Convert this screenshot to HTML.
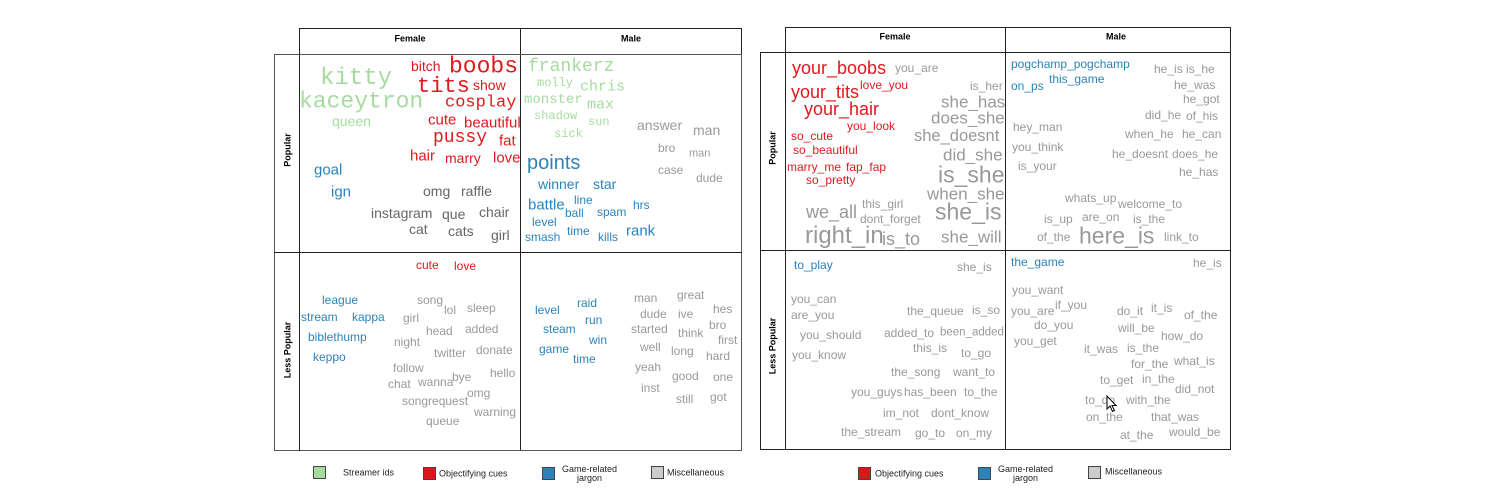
<!DOCTYPE html>
<html><head><meta charset="utf-8"><style>
html,body{margin:0;padding:0;background:#fff;width:1500px;height:500px;overflow:hidden;position:relative;font-family:"Liberation Sans",sans-serif}
.b{position:absolute;border:1px solid #222;box-sizing:border-box}
span{position:absolute;white-space:nowrap;line-height:1;transform:translateY(-50%);font-size:12px;color:#999}
.m{font-family:"Liberation Mono",monospace}
.g{color:#a6dba0}.r{color:#e0191e}.u{color:#2b83ba}.d{color:#666}
.h{font-size:9px;font-weight:bold;color:#000;transform:translate(-50%,-50%)}
.v{font-size:9px;font-weight:bold;color:#000;transform:translate(-50%,-50%) rotate(-90deg)}
.lg{font-size:9px;color:#222;text-align:center}
.sq{position:absolute;width:13px;height:13px;border:1px solid #444;box-sizing:border-box}
</style></head><body>
<!-- grid 1 -->
<div class="b" style="left:299px;top:28px;width:443px;height:27px"></div>
<div class="b" style="left:520px;top:28px;width:1px;height:422px;border-width:0 0 0 1px"></div>
<div class="b" style="left:274px;top:54px;width:468px;height:397px;border-color:#555"></div>
<div class="b" style="left:299px;top:54px;width:1px;height:397px;border-width:0 0 0 1px"></div>
<div class="b" style="left:274px;top:252px;width:468px;height:1px;border-width:1px 0 0 0"></div>
<span class="h" style="left:410px;top:39px">Female</span>
<span class="h" style="left:631px;top:39px">Male</span>
<span class="v" style="left:288px;top:150px">Popular</span>
<span class="v" style="left:288px;top:350px">Less Popular</span>

<span class="g m" style="left:320px;top:79px;font-size:24px">kitty</span>
<span class="g m" style="left:299px;top:102px;font-size:23px">kaceytron</span>
<span class="g" style="left:332px;top:121px;font-size:14px">queen</span>
<span class="r" style="left:411px;top:66px;font-size:14px">bitch</span>
<span class="r m" style="left:449px;top:67px;font-size:23px">boobs</span>
<span class="r m" style="left:417px;top:87px;font-size:22px">tits</span>
<span class="r" style="left:473px;top:85px;font-size:14px">show</span>
<span class="r m" style="left:445px;top:103px;font-size:17px">cosplay</span>
<span class="r" style="left:428px;top:120px;font-size:15px">cute</span>
<span class="r" style="left:464px;top:123px;font-size:15px">beautiful</span>
<span class="r m" style="left:433px;top:138px;font-size:18px">pussy</span>
<span class="r" style="left:499px;top:141px;font-size:15px">fat</span>
<span class="r" style="left:410px;top:156px;font-size:15px">hair</span>
<span class="r" style="left:445px;top:158px;font-size:14px">marry</span>
<span class="r" style="left:493px;top:158px;font-size:15px">love</span>
<span class="u" style="left:314px;top:170px;font-size:15px">goal</span>
<span class="u" style="left:331px;top:192px;font-size:15px">ign</span>
<span class="d" style="left:423px;top:191px;font-size:14px">omg</span>
<span class="d" style="left:461px;top:191px;font-size:14px">raffle</span>
<span class="d" style="left:371px;top:213px;font-size:14px">instagram</span>
<span class="d" style="left:442px;top:214px;font-size:14px">que</span>
<span class="d" style="left:479px;top:212px;font-size:14px">chair</span>
<span class="d" style="left:409px;top:229px;font-size:14px">cat</span>
<span class="d" style="left:448px;top:231px;font-size:14px">cats</span>
<span class="d" style="left:491px;top:235px;font-size:14px">girl</span>

<span class="g m" style="left:528px;top:67px;font-size:18px">frankerz</span>
<span class="g m" style="left:537px;top:83px">molly</span>
<span class="g m" style="left:580px;top:87px;font-size:15px">chris</span>
<span class="g m" style="left:524px;top:100px;font-size:14px">monster</span>
<span class="g m" style="left:587px;top:105px;font-size:15px">max</span>
<span class="g m" style="left:534px;top:116px">shadow</span>
<span class="g m" style="left:588px;top:122px">sun</span>
<span class="g m" style="left:554px;top:134px">sick</span>
<span style="left:637px;top:125px;font-size:14px">answer</span>
<span style="left:693px;top:130px;font-size:14px">man</span>
<span style="left:658px;top:148px">bro</span>
<span style="left:689px;top:154px;font-size:11px">man</span>
<span style="left:658px;top:170px">case</span>
<span style="left:696px;top:178px">dude</span>
<span class="u" style="left:527px;top:163px;font-size:20px">points</span>
<span class="u" style="left:538px;top:184px;font-size:14px">winner</span>
<span class="u" style="left:593px;top:184px;font-size:14px">star</span>
<span class="u" style="left:528px;top:205px;font-size:15px">battle</span>
<span class="u" style="left:574px;top:200px">line</span>
<span class="u" style="left:565px;top:213px">ball</span>
<span class="u" style="left:597px;top:212px">spam</span>
<span class="u" style="left:633px;top:205px">hrs</span>
<span class="u" style="left:532px;top:222px">level</span>
<span class="u" style="left:567px;top:231px">time</span>
<span class="u" style="left:626px;top:231px;font-size:15px">rank</span>
<span class="u" style="left:525px;top:237px">smash</span>
<span class="u" style="left:598px;top:237px">kills</span>

<span class="r" style="left:416px;top:265px">cute</span>
<span class="r" style="left:454px;top:266px">love</span>
<span class="u" style="left:322px;top:300px">league</span>
<span class="u" style="left:301px;top:317px">stream</span>
<span class="u" style="left:352px;top:317px">kappa</span>
<span class="u" style="left:308px;top:337px">biblethump</span>
<span class="u" style="left:313px;top:357px">keppo</span>
<span style="left:417px;top:300px">song</span>
<span style="left:444px;top:310px">lol</span>
<span style="left:467px;top:308px">sleep</span>
<span style="left:403px;top:318px">girl</span>
<span style="left:426px;top:331px">head</span>
<span style="left:465px;top:329px">added</span>
<span style="left:394px;top:342px">night</span>
<span style="left:434px;top:353px">twitter</span>
<span style="left:476px;top:350px">donate</span>
<span style="left:393px;top:368px">follow</span>
<span style="left:490px;top:373px">hello</span>
<span style="left:388px;top:384px">chat</span>
<span style="left:418px;top:382px">wanna</span>
<span style="left:452px;top:377px">bye</span>
<span style="left:467px;top:393px">omg</span>
<span style="left:402px;top:401px">songrequest</span>
<span style="left:474px;top:412px">warning</span>
<span style="left:426px;top:421px">queue</span>

<span class="u" style="left:535px;top:310px">level</span>
<span class="u" style="left:577px;top:303px">raid</span>
<span class="u" style="left:585px;top:320px">run</span>
<span class="u" style="left:543px;top:329px">steam</span>
<span class="u" style="left:589px;top:340px">win</span>
<span class="u" style="left:539px;top:349px">game</span>
<span class="u" style="left:573px;top:359px">time</span>
<span style="left:634px;top:298px">man</span>
<span style="left:677px;top:295px">great</span>
<span style="left:640px;top:314px">dude</span>
<span style="left:678px;top:314px">ive</span>
<span style="left:713px;top:309px">hes</span>
<span style="left:631px;top:329px">started</span>
<span style="left:709px;top:325px">bro</span>
<span style="left:678px;top:333px">think</span>
<span style="left:718px;top:340px">first</span>
<span style="left:640px;top:347px">well</span>
<span style="left:671px;top:351px">long</span>
<span style="left:706px;top:356px">hard</span>
<span style="left:635px;top:367px">yeah</span>
<span style="left:672px;top:376px">good</span>
<span style="left:713px;top:377px">one</span>
<span style="left:641px;top:388px">inst</span>
<span style="left:676px;top:399px">still</span>
<span style="left:710px;top:397px">got</span>

<div class="sq" style="left:313px;top:466px;background:#a6dba0"></div>
<span class="lg" style="left:343px;top:473px">Streamer ids</span>
<div class="sq" style="left:423px;top:467px;background:#d7191c"></div>
<span class="lg" style="left:439px;top:474px">Objectifying cues</span>
<div class="sq" style="left:542px;top:467px;background:#2b83ba"></div>
<span class="lg" style="left:562px;top:474px">Game-related<br>jargon</span>
<div class="sq" style="left:651px;top:466px;background:#ccc"></div>
<span class="lg" style="left:667px;top:473px">Miscellaneous</span>

<!-- grid 2 -->
<div class="b" style="left:785px;top:27px;width:446px;height:26px"></div>
<div class="b" style="left:1005px;top:27px;width:1px;height:423px;border-width:0 0 0 1px"></div>
<div class="b" style="left:760px;top:52px;width:471px;height:398px"></div>
<div class="b" style="left:785px;top:52px;width:1px;height:398px;border-width:0 0 0 1px"></div>
<div class="b" style="left:760px;top:250px;width:471px;height:1px;border-width:1px 0 0 0"></div>
<span class="h" style="left:895px;top:37px">Female</span>
<span class="h" style="left:1116px;top:37px">Male</span>
<span class="v" style="left:773px;top:148px">Popular</span>
<span class="v" style="left:773px;top:346px">Less Popular</span>

<span class="r" style="left:792px;top:68px;font-size:18px">your_boobs</span>
<span style="left:895px;top:68px">you_are</span>
<span class="r" style="left:791px;top:92px;font-size:18px">your_tits</span>
<span class="r" style="left:860px;top:85px">love_you</span>
<span class="r" style="left:804px;top:109px;font-size:18px">your_hair</span>
<span style="left:970px;top:86px">is_her</span>
<span style="left:941px;top:102px;font-size:17px">she_has</span>
<span style="left:931px;top:118px;font-size:17px">does_she</span>
<span class="r" style="left:847px;top:126px">you_look</span>
<span style="left:914px;top:136px;font-size:16.5px">she_doesnt</span>
<span class="r" style="left:791px;top:136px">so_cute</span>
<span class="r" style="left:793px;top:150px">so_beautiful</span>
<span style="left:943px;top:155px;font-size:17px">did_she</span>
<span class="r" style="left:787px;top:167px">marry_me</span>
<span class="r" style="left:846px;top:167px">fap_fap</span>
<span style="left:938px;top:175px;font-size:23px">is_she</span>
<span class="r" style="left:806px;top:180px">so_pretty</span>
<span style="left:927px;top:194px;font-size:17px">when_she</span>
<span style="left:862px;top:204px">this_girl</span>
<span style="left:935px;top:212px;font-size:23px">she_is</span>
<span style="left:806px;top:212px;font-size:18px">we_all</span>
<span style="left:860px;top:219px">dont_forget</span>
<span style="left:805px;top:236px;font-size:24px">right_in</span>
<span style="left:882px;top:239px;font-size:18px">is_to</span>
<span style="left:941px;top:237px;font-size:17px">she_will</span>

<span class="u" style="left:1011px;top:64px">pogchamp_pogchamp</span>
<span class="u" style="left:1049px;top:79px">this_game</span>
<span class="u" style="left:1011px;top:86px">on_ps</span>
<span style="left:1154px;top:69px">he_is is_he</span>
<span style="left:1174px;top:85px">he_was</span>
<span style="left:1183px;top:99px">he_got</span>
<span style="left:1145px;top:115px">did_he</span>
<span style="left:1186px;top:116px">of_his</span>
<span style="left:1013px;top:127px">hey_man</span>
<span style="left:1125px;top:134px">when_he</span>
<span style="left:1182px;top:134px">he_can</span>
<span style="left:1012px;top:147px">you_think</span>
<span style="left:1112px;top:154px">he_doesnt</span>
<span style="left:1172px;top:154px">does_he</span>
<span style="left:1018px;top:166px">is_your</span>
<span style="left:1179px;top:172px">he_has</span>
<span style="left:1065px;top:198px">whats_up</span>
<span style="left:1118px;top:204px">welcome_to</span>
<span style="left:1044px;top:219px">is_up</span>
<span style="left:1082px;top:217px">are_on</span>
<span style="left:1133px;top:219px">is_the</span>
<span style="left:1037px;top:237px">of_the</span>
<span style="left:1079px;top:236px;font-size:23px">here_is</span>
<span style="left:1164px;top:237px">link_to</span>

<span class="u" style="left:794px;top:265px">to_play</span>
<span style="left:957px;top:267px">she_is</span>
<span style="left:791px;top:299px">you_can</span>
<span style="left:791px;top:315px">are_you</span>
<span style="left:907px;top:311px">the_queue</span>
<span style="left:972px;top:310px">is_so</span>
<span style="left:800px;top:335px">you_should</span>
<span style="left:884px;top:333px">added_to</span>
<span style="left:940px;top:333px;font-size:11.5px">been_added</span>
<span style="left:913px;top:348px">this_is</span>
<span style="left:961px;top:353px">to_go</span>
<span style="left:792px;top:355px">you_know</span>
<span style="left:891px;top:372px">the_song</span>
<span style="left:953px;top:372px">want_to</span>
<span style="left:851px;top:392px">you_guys</span>
<span style="left:904px;top:392px">has_been</span>
<span style="left:964px;top:392px">to_the</span>
<span style="left:883px;top:413px">im_not</span>
<span style="left:931px;top:413px">dont_know</span>
<span style="left:841px;top:432px">the_stream</span>
<span style="left:915px;top:433px">go_to</span>
<span style="left:956px;top:433px">on_my</span>

<span class="u" style="left:1011px;top:262px">the_game</span>
<span style="left:1193px;top:263px">he_is</span>
<span style="left:1012px;top:290px">you_want</span>
<span style="left:1011px;top:311px">you_are</span>
<span style="left:1055px;top:305px">if_you</span>
<span style="left:1117px;top:311px">do_it</span>
<span style="left:1151px;top:308px">it_is</span>
<span style="left:1184px;top:315px">of_the</span>
<span style="left:1034px;top:325px">do_you</span>
<span style="left:1118px;top:328px">will_be</span>
<span style="left:1161px;top:336px">how_do</span>
<span style="left:1014px;top:341px">you_get</span>
<span style="left:1084px;top:349px">it_was</span>
<span style="left:1127px;top:348px">is_the</span>
<span style="left:1131px;top:364px">for_the</span>
<span style="left:1174px;top:361px">what_is</span>
<span style="left:1100px;top:380px">to_get</span>
<span style="left:1142px;top:379px">in_the</span>
<span style="left:1175px;top:389px">did_not</span>
<span style="left:1085px;top:400px">to_do</span>
<span style="left:1126px;top:400px">with_the</span>
<span style="left:1086px;top:417px">on_the</span>
<span style="left:1151px;top:417px">that_was</span>
<span style="left:1120px;top:435px">at_the</span>
<span style="left:1169px;top:432px">would_be</span>
<svg style="position:absolute;left:1106px;top:395px" width="12" height="18" viewBox="0 0 12 18"><path d="M1 1 L1 14 L4 11 L6.5 16.5 L8.5 15.5 L6 10.5 L10 10.5 Z" fill="#fff" stroke="#000" stroke-width="1"/></svg>

<div class="sq" style="left:858px;top:467px;background:#d7191c"></div>
<span class="lg" style="left:875px;top:474px">Objectifying cues</span>
<div class="sq" style="left:978px;top:467px;background:#2b83ba"></div>
<span class="lg" style="left:998px;top:474px">Game-related<br>jargon</span>
<div class="sq" style="left:1088px;top:466px;background:#ccc"></div>
<span class="lg" style="left:1105px;top:472px">Miscellaneous</span>
</body></html>
